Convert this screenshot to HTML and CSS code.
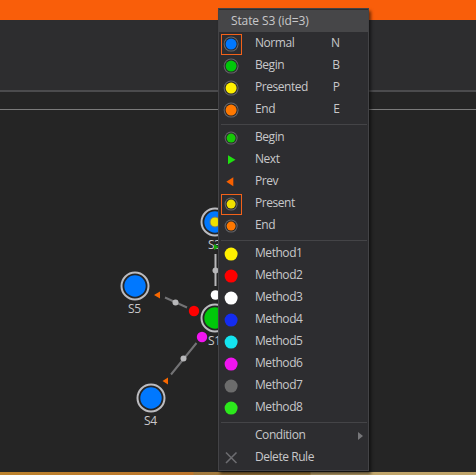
FILE: index.html
```html
<!DOCTYPE html>
<html lang="en">
<head>
<meta charset="utf-8">
<title>State editor</title>
<link rel="stylesheet" href="styles.css">
</head>
<body>
<div class="app">
  <header class="titlebar"></header>
  <div class="toolbar"></div>
  <div class="tabstrip"></div>
  <main class="canvas">
    <svg class="graph" width="476" height="362" viewBox="0 110 476 362">
      <g class="links">
        <path class="link-strong" d="M215.500 254V286"/>
        <path d="M165 297.500L187 307.500M171 374.500L196.500 343"/>
      </g>
      <g fill="#b8b8ba"><circle cx="215.500" cy="270.500" r="3"/><circle cx="175.500" cy="302.500" r="3"/><circle cx="183.500" cy="358.500" r="3"/></g>
      <g class="node">
        <circle cx="215" cy="222" r="13.500"/><circle cx="135" cy="286" r="13.500"/>
        <circle cx="151" cy="398" r="13.500"/><circle cx="215" cy="318" r="13.500"/>
      </g>
      <g fill="#0078ff"><circle cx="215" cy="222" r="10.700"/><circle cx="135" cy="286" r="10.700"/><circle cx="151" cy="398" r="10.700"/></g>
      <circle cx="215" cy="318" r="10.700" fill="#00c80a"/>
      <circle cx="215" cy="222" r="5" fill="#f0e000" stroke="#777a70"/>
      <circle cx="215.500" cy="295" r="4.800" fill="#fff"/>
      <circle cx="194" cy="311" r="5.200" fill="#f00"/>
      <circle cx="202" cy="337" r="5.200" fill="#f014f0"/>
      <path fill="#f86800" d="M154 295l6-3.500v7zM162.500 381l5.500-3.500v7z"/>
      <g class="labels" text-anchor="middle">
        <text x="214.500" y="249">S3</text><text x="134.500" y="313">S5</text>
        <text x="150.500" y="425">S4</text><text x="214.500" y="345">S1</text>
      </g>
      <path fill="#16a80c" d="M214 244l5 3-5 3z"/>
    </svg>
  </main>
  <footer class="statusbar"></footer>
</div>

<div class="menu">
  <div class="menu-title">State S3 (id=3)</div>
  <div class="item"><span class="icon checked"><i class="dot ring blue"></i></span><span class="label">Normal</span><span class="key">N</span></div>
  <div class="item"><span class="icon"><i class="dot ring green"></i></span><span class="label">Begin</span><span class="key">B</span></div>
  <div class="item"><span class="icon"><i class="dot ring yellow"></i></span><span class="label">Presented</span><span class="key">P</span></div>
  <div class="item"><span class="icon"><i class="dot ring orange"></i></span><span class="label">End</span><span class="key">E</span></div>
  <hr>
  <div class="item"><span class="icon"><i class="dot ring small leaf"></i></span><span class="label">Begin</span></div>
  <div class="item"><span class="icon"><svg width="21" height="21"><path fill="#20e010" d="M7 5.300l7.500 4.500-7.500 4.500z"/></svg></span><span class="label">Next</span></div>
  <div class="item"><span class="icon"><svg width="21" height="21"><path fill="#f86000" d="M12.300 5.300v9L5.300 9.800z"/></svg></span><span class="label">Prev</span></div>
  <div class="item"><span class="icon checked"><i class="dot ring small gold"></i></span><span class="label">Present</span></div>
  <div class="item"><span class="icon"><i class="dot ring small orange"></i></span><span class="label">End</span></div>
  <hr>
  <div class="item"><span class="icon"><i class="dot yellow"></i></span><span class="label">Method1</span></div>
  <div class="item"><span class="icon"><i class="dot red"></i></span><span class="label">Method2</span></div>
  <div class="item"><span class="icon"><i class="dot white"></i></span><span class="label">Method3</span></div>
  <div class="item"><span class="icon"><i class="dot navy"></i></span><span class="label">Method4</span></div>
  <div class="item"><span class="icon"><i class="dot cyan"></i></span><span class="label">Method5</span></div>
  <div class="item"><span class="icon"><i class="dot magenta"></i></span><span class="label">Method6</span></div>
  <div class="item"><span class="icon"><i class="dot gray"></i></span><span class="label">Method7</span></div>
  <div class="item"><span class="icon"><i class="dot lime"></i></span><span class="label">Method8</span></div>
  <hr>
  <div class="item"><span class="icon"></span><span class="label">Condition</span><svg class="arrow" width="5" height="8"><path fill="#77777a" d="M0 0l5 4-5 4z"/></svg></div>
  <div class="item"><span class="icon"><svg width="21" height="21"><path stroke="#6c6c70" stroke-width="1.600" d="M5 4.500l10.500 10.500M15.500 4.500L5 15"/></svg></span><span class="label">Delete Rule</span></div>
</div>
</body>
</html>
```
FILE: styles.css
```css
* { box-sizing: border-box; }
body {
  margin: 0;
  background: #252525;
  font-family: "Open Sans", "Noto Sans", sans-serif;
  font-size: 12px;
  color: #c8c8ca;
  overflow: hidden;
}
.app { display: flex; flex-direction: column; height: 475px; }
.titlebar { height: 20px; background: #f95e0a; }
.toolbar { height: 72px; background: #2d2d2f; border-bottom: 2px solid #4b4b4d; }
.tabstrip { height: 18px; border-bottom: 1px solid #7a7a7a; }
.canvas { height: 362px; }
.graph { display: block; }
.links { stroke: #737375; stroke-width: 2; }
.link-strong { stroke: #b8b8ba; }
.node { fill: #252525; stroke: #bcbcc0; stroke-width: 2; }
.labels { fill: #c8c8ca; font-size: 12px; letter-spacing: -.3px; }
.statusbar {
  height: 3px;
  background: linear-gradient(90deg, #bd832d 0, #bd752b 193px, #a2793d 194px, #a9823c 310px, #c0a56b 311px);
}

.menu {
  position: absolute;
  left: 218px;
  top: 8px;
  width: 151px;
  height: 463px;
  padding: 1px 0;
  background: #2d2d30;
  border: 1px solid #434346;
  box-shadow: 2px 3px 3px rgba(0, 0, 0, .55);
}
.menu-title {
  height: 22px;
  padding-left: 12px;
  line-height: 22px;
  letter-spacing: -.12px;
  background: #464648;
}
.item { display: flex; align-items: center; height: 22px; padding-left: 2px; }
.icon {
  display: flex;
  align-items: center;
  justify-content: center;
  width: 21px;
  height: 21px;
  margin-top: 3px;
  flex: none;
}
.checked { border: 1px solid #f2611a; }
.label {
  flex: 1;
  margin-left: 13px;
  line-height: 22px;
  letter-spacing: -.45px;
  white-space: nowrap;
}
.key { width: 12px; margin-right: 28px; text-align: right; line-height: 22px; }
.arrow { margin: 2px 5px 0 0; }
hr { height: 1px; margin: 4px 1px 1px 2px; border: 0; background: #444447; }

.dot {
  width: 13px;
  height: 13px;
  border-radius: 50%;
  flex: none;
  transform: translate(-.4px, -.4px);
}
.ring { width: 11px; height: 11px; box-shadow: 0 0 0 1px #262628, 0 0 0 2px #66666a; }
.small { width: 9px; height: 9px; }
.blue { background: #0078ff; }
.green { background: #00c80a; }
.yellow { background: #fff000; }
.orange { background: #ff7800; }
.leaf { background: #18c808; }
.gold { background: #f0e000; }
.red { background: #f00; }
.white { background: #fff; }
.navy { background: #142cf0; }
.cyan { background: #14e4f0; }
.magenta { background: #f014f0; }
.gray { background: #6c6c6c; }
.lime { background: #2ce81c; }
```
